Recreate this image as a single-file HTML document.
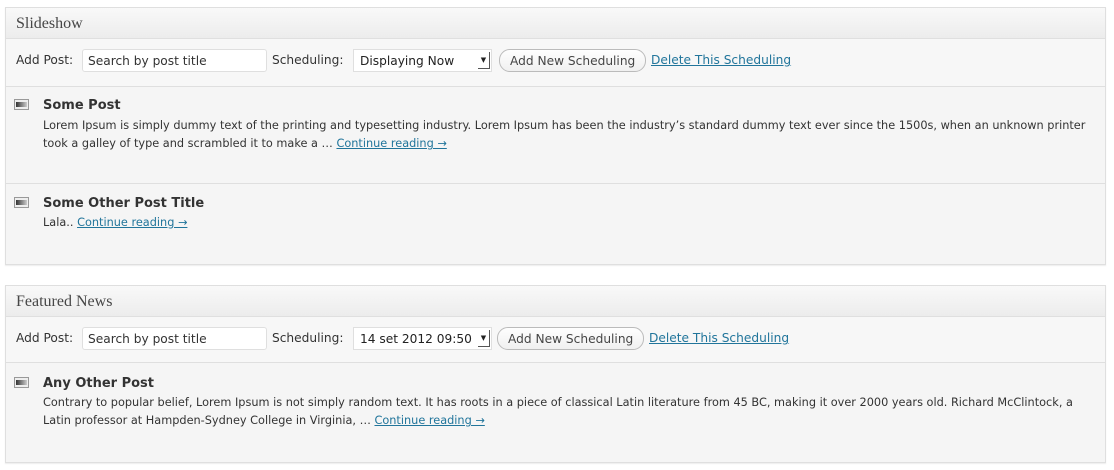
<!DOCTYPE html>
<html><head><meta charset="utf-8"><style>
*{box-sizing:border-box;margin:0;padding:0}
body{width:1114px;height:470px;background:#fff;font-family:"DejaVu Sans",sans-serif;color:#333;position:relative;overflow:hidden}
.panel{position:absolute;left:5px;width:1101px;border:1px solid #dfdfdf;background:#f5f5f5;box-shadow:0 1px 1px rgba(0,0,0,.08)}
.hd{height:31px;background:linear-gradient(#f9f9f9,#ececec);border-bottom:1px solid #dfdfdf;font-family:"Liberation Serif","DejaVu Serif",serif;font-size:16px;color:#464646;padding:7px 0 0 10px}
.tb{height:48px;background:#f7f7f7;border-bottom:1px solid #dfdfdf;position:relative;font-size:12.2px}
.tb span,.tb .in,.tb .sel,.tb .btn,.tb a{position:absolute}
.in{background:#fff;border:1px solid #dfdfdf;border-radius:3px;height:23px;padding:4px 0 0 5px;color:#333}
.sel{background:#fff;border:1px solid #dfdfdf;height:23px;padding:4px 0 0 6px;color:#222}
.arr{position:absolute;right:1px;top:2px;width:12px;height:17px;border-right:1px solid #555;border-bottom:1px solid #555;font-size:7px;text-align:center;line-height:17px}
.btn{border:1px solid #bbb;border-radius:11px;height:23px;padding:4px 10px 0;color:#464646;background:linear-gradient(#fefefe,#f0f0f0)}
a{color:#21759b;text-decoration:underline}
.it{position:relative;border-bottom:1px solid #dfdfdf;background:#f5f5f5}
.ic{position:absolute;left:8px;width:15px;height:11px;border:1px solid #999;background:#eee}
.ic:after{content:"";position:absolute;left:1px;top:2px;width:11px;height:5px;background:linear-gradient(90deg,#333,#ccc)}
.t{position:absolute;left:37px;font-weight:bold;font-size:13px;color:#333}
.p{position:absolute;left:37px;font-size:11.3px;line-height:18px;color:#333;width:1060px}
.p a{color:#21759b}
</style></head><body>
<div class="panel" style="top:7px;height:258px">
 <div class="hd">Slideshow</div>
 <div class="tb">
  <span style="left:10px;top:14px">Add Post:</span>
  <div class="in" style="left:76px;top:10px;width:185px">Search by post title</div>
  <span style="left:266px;top:14px">Scheduling:</span>
  <div class="sel" style="left:347px;top:10px;width:139px">Displaying Now<div class="arr">▼</div></div>
  <div class="btn" style="left:493px;top:10px">Add New Scheduling</div>
  <a style="left:645px;top:14px">Delete This Scheduling</a>
 </div>
 <div class="it" style="height:97px">
  <div class="ic" style="top:12px"></div>
  <div class="t" style="top:11px">Some Post</div>
  <div class="p" style="top:30px">Lorem Ipsum is simply dummy text of the printing and typesetting industry. Lorem Ipsum has been the industry’s standard dummy text ever since the 1500s, when an unknown printer took a galley of type and scrambled it to make a … <a>Continue reading →</a></div>
 </div>
 <div class="it" style="height:80px;border-bottom:none">
  <div class="ic" style="top:13px"></div>
  <div class="t" style="top:12px">Some Other Post Title</div>
  <div class="p" style="top:30px">Lala.. <a>Continue reading →</a></div>
 </div>
</div>
<div class="panel" style="top:285px;height:178px">
 <div class="hd">Featured News</div>
 <div class="tb" style="height:46px">
  <span style="left:10px;top:14px">Add Post:</span>
  <div class="in" style="left:76px;top:10px;width:185px">Search by post title</div>
  <span style="left:266px;top:14px">Scheduling:</span>
  <div class="sel" style="left:347px;top:10px;width:139px">14 set 2012 09:50<div class="arr">▼</div></div>
  <div class="btn" style="left:491px;top:10px">Add New Scheduling</div>
  <a style="left:643px;top:14px">Delete This Scheduling</a>
 </div>
 <div class="it" style="height:98px;border-bottom:none">
  <div class="ic" style="top:14px"></div>
  <div class="t" style="top:13px">Any Other Post</div>
  <div class="p" style="top:31px">Contrary to popular belief, Lorem Ipsum is not simply random text. It has roots in a piece of classical Latin literature from 45 BC, making it over 2000 years old. Richard McClintock, a Latin professor at Hampden-Sydney College in Virginia, … <a>Continue reading →</a></div>
 </div>
</div>
</body></html>
